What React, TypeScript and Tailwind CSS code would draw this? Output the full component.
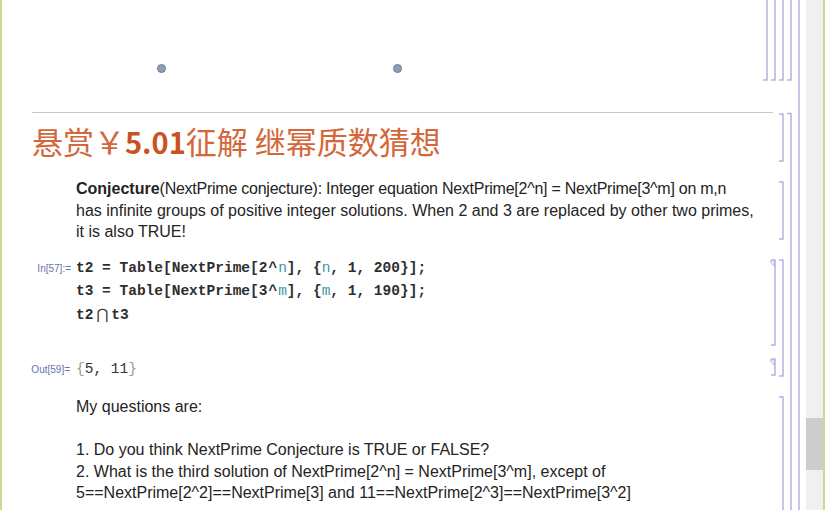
import type { ReactNode } from "react";

function Var({ children }: { children: ReactNode }) {
  return <span className="font-normal text-[#3d95a8]">{children}</span>;
}

function CellBrackets() {
  // Mathematica 笔记本右侧的单元格括号
  return (
    <svg width="46" height="510" viewBox="0 0 46 510" className="shrink-0">
      <g fill="none" stroke="#b3b3e3" strokeWidth="1.5">
        <path d="M7 0 V80 H3" />
        <path d="M15 0 V80 H11" />
        <path d="M23 0 V80 H19" />
        <path d="M31 0 V80 H27" />
        <path d="M39 0 V510" />
        <path d="M27 113.5 H31 V510" />
        <path d="M19 114 H23 V161 H19" />
        <path d="M19 182 H23 V239 H19" />
        <path d="M19 260 H23 V376 H19" />
        <path d="M11 260 H15 V345 H11" />
        <path d="M10 261 L14.5 261 L14 266 Z" strokeWidth="1" />
        <path d="M11 359 H15 V375 H11" />
        <path d="M10 360 L14.5 360 L14 365 Z" strokeWidth="1" />
        <path d="M19 397 H23 V510" />
      </g>
    </svg>
  );
}

export default function App() {
  return (
    <div className="flex h-[510px] w-[825px] overflow-hidden bg-white font-['Liberation_Sans',Arial,sans-serif] text-[#242424]">
      <div className="w-[2px] shrink-0 bg-[#c4dd90]" />

      <main className="flex w-[758px] shrink-0 flex-col">
        {/* 空白图形单元 */}
        <div className="flex h-[112px] items-start pt-[64px]">
          <span className="ml-[155px] h-[9px] w-[9px] rounded-full border border-[#6e7e98] bg-[#8f9eb6]" />
          <span className="ml-[227px] h-[9px] w-[9px] rounded-full border border-[#6e7e98] bg-[#8f9eb6]" />
        </div>
        <div className="ml-[30px] mr-[-13px] h-px bg-[#c8c8c8]" />

        {/* 标题 */}
        <h1 className="ml-[30px] mt-[8px] h-[40px] whitespace-nowrap font-['Noto_Sans_CJK_SC',sans-serif] text-[31px] leading-[40px] text-[#d4673a]">
          悬赏￥<span className="text-[29px] font-bold text-[#c9521f]">5.01</span>征解 继幂质数猜想
        </h1>

        {/* 文本 */}
        <p className="ml-[74px] mt-[17px] whitespace-nowrap text-[16px] leading-[21.5px]">
          <b>Conjecture</b>
          <span className="tracking-[-0.25px]">(NextPrime conjecture): Integer equation NextPrime[2^n] = NextPrime[3^m] on m,n</span>
          <br />
          has infinite groups of positive integer solutions. When 2 and 3 are replaced by other two primes,
          <br />
          it is also TRUE!
        </p>

        {/* 输入 */}
        <div className="mt-[14.5px] flex items-baseline">
          <span className="w-[74px] shrink-0 pr-[5px] text-right text-[10px] text-[#6b74aa]">In[57]:=</span>
          <pre className="font-['Liberation_Mono',monospace] text-[14.5px] font-bold leading-[23px] text-[#2e2e2e]">
            t2 = Table[NextPrime[2<span className="px-[1px]">^</span><Var>n</Var>], {"{"}<Var>n</Var>, 1, 200{"}"}];
            {"\n"}t3 = Table[NextPrime[3<span className="px-[1px]">^</span><Var>m</Var>], {"{"}<Var>m</Var>, 1, 190{"}"}];
            {"\n"}t2<span className="px-[3px] font-['DejaVu_Sans',sans-serif] font-normal">⋂</span>t3
          </pre>
        </div>

        {/* 输出 */}
        <div className="mt-[30.5px] flex items-baseline">
          <span className="w-[74px] shrink-0 pr-[6px] text-right text-[10px] text-[#6b74aa]">Out[59]=</span>
          <pre className="font-['Liberation_Mono',monospace] text-[14.5px] leading-[23px] text-[#333]">
            <span className="text-[#999]">{"{"}</span>5, 11<span className="text-[#999]">{"}"}</span>
          </pre>
        </div>

        {/* 问题 */}
        <div className="ml-[74px] mt-[15.5px] whitespace-nowrap text-[16px] leading-[21.5px]">
          <p>My questions are:</p>
          <p className="mt-[21.5px]">1. Do you think NextPrime Conjecture is TRUE or FALSE?</p>
          <p>2. What is the third solution of NextPrime[2^n] = NextPrime[3^m], except of</p>
          <p>5==NextPrime[2^2]==NextPrime[3] and 11==NextPrime[2^3]==NextPrime[3^2]</p>
        </div>
      </main>

      <CellBrackets />

      <div className="flex w-[17px] shrink-0 flex-col bg-[#f0f0f0] pt-[418px]">
        <div className="h-[52px] bg-[#cdcdcd]" />
      </div>
      <div className="w-[2px] shrink-0 bg-[#c4dd90]" />
    </div>
  );
}
